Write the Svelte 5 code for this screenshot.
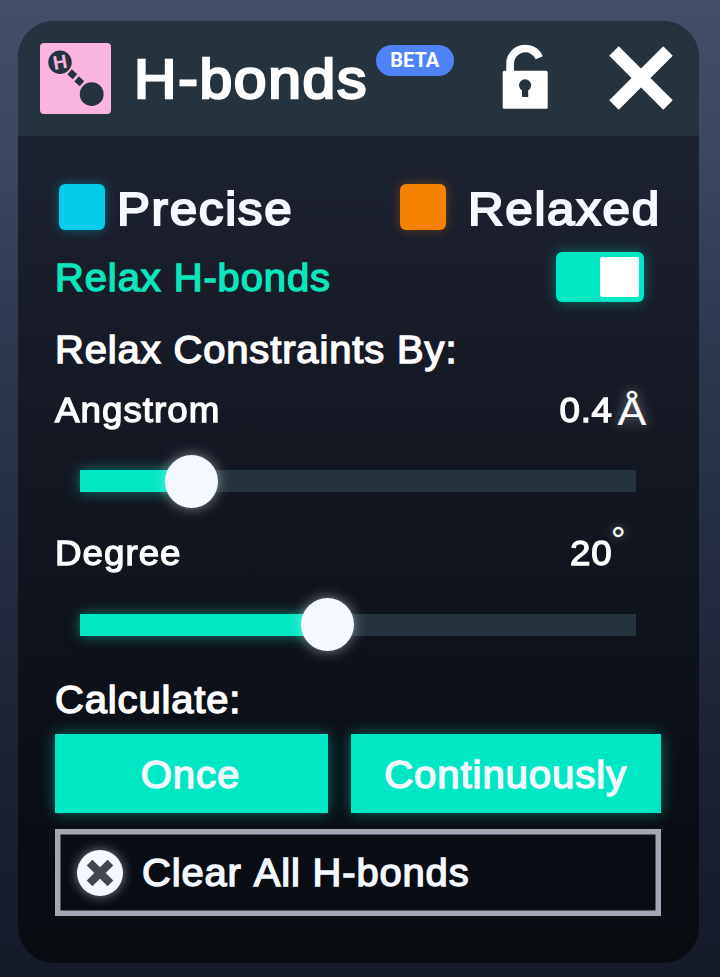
<script>
  let relaxOn = $state(true);
  const sliders = [
    { label: 'Angstrom', value: '0.4', unit: 'Å', kind: 'ang', pos: 111 },
    { label: 'Degree', value: '20', unit: '°', kind: 'deg', pos: 247 }
  ];
</script>

<div class="screen">
  <section class="panel">
    <header>
      <svg class="logo" width="71" height="71" viewBox="0 0 71 71">
        <rect width="71" height="71" rx="4" fill="#fab4e0" />
        <g fill="#24333d">
          <circle cx="20" cy="19.3" r="11.7" />
          <circle cx="51.7" cy="51.2" r="11.9" />
          <rect x="-3.6" y="-3.4" width="7.2" height="6.8" transform="translate(32.3 31.3) rotate(42)" />
          <rect x="-3.6" y="-3.4" width="7.2" height="6.8" transform="translate(39.3 38.3) rotate(42)" />
        </g>
        <text x="0" y="6.6" text-anchor="middle" transform="translate(20 19.3) rotate(-10)">H</text>
      </svg>
      <h1>H-bonds</h1>
      <span class="beta">BETA</span>
      <svg class="lock" width="46" height="65" viewBox="502 44 46 65">
        <path d="M510.1 72V63.7A15.2 15.2 0 0 1 539.3 57.8" fill="none" stroke="#fff" stroke-width="7.7" />
        <rect x="502.7" y="70.7" width="45" height="38" rx="1.5" fill="#fff" />
        <path d="M522 97V90.3A6 6 0 1 1 528.2 90.3V97Z" fill="#24333d" />
      </svg>
      <svg class="close" width="64" height="64" viewBox="0 0 64 64">
        <path d="M5 5L59 59M59 5L5 59" stroke="#fff" stroke-width="13.4" />
      </svg>
    </header>

    <div class="body">
      <div class="legend">
        <i class="swatch cyan"></i><span class="precise">Precise</span>
        <i class="swatch orange"></i><span class="relaxed">Relaxed</span>
      </div>
      <div class="toggle-row">
        <span class="wide">Relax H-bonds</span>
        <button class="toggle" class:on={relaxOn} aria-label="Relax H-bonds" onclick={() => (relaxOn = !relaxOn)}><i></i></button>
      </div>
      <div class="heading wide">Relax Constraints By:</div>
      {#each sliders as s}
        <div class="slider">
          <div class="label">
            <span class="wide">{s.label}</span>
            <span class="value">{s.value}</span>
            <span class="unit {s.kind}">{s.unit}</span>
          </div>
          <div class="track">
            <div class="fill" style="width: {s.pos}px"></div>
            <i class="thumb"></i>
          </div>
        </div>
      {/each}
      <div class="heading calc wide">Calculate:</div>
      <div class="buttons">
        <button><span>Once</span></button>
        <button><span>Continuously</span></button>
      </div>
      <button class="clear">
        <svg width="46" height="46" viewBox="0 0 46 46">
          <circle cx="23" cy="23" r="23" fill="#f4f8ff" />
          <path d="M12.6 12.6L33.4 33.4M33.4 12.6L12.6 33.4" stroke="#41464f" stroke-width="8" />
        </svg>
        <span class="wide">Clear All H-bonds</span>
      </button>
    </div>
  </section>
</div>

<style>
  :global(body) { margin: 0; background: #161c2a; }
  .screen {
    box-sizing: border-box;
    width: 720px;
    height: 977px;
    padding: 20.5px 21.5px 14.5px 17.5px;
    background: linear-gradient(#434f69 0, #3b4760 160px, #2e3a51 320px, #232c41 560px, #1a2133 780px, #141a28 977px);
    font-family: "Liberation Sans", Arial, sans-serif;
    font-kerning: none;
    color: #fff;
    overflow: hidden;
  }
  .panel {
    height: 942px;
    border-radius: 36px;
    overflow: hidden;
    background: linear-gradient(#1d2231 115px, #161a26 350px, #0f131c 590px, #0a0d15 800px, #080c11 942px);
  }
  .wide { transform: translateY(.6px) scaleX(1.05); transform-origin: 0 50%; }
  header {
    box-sizing: border-box;
    height: 115.5px;
    padding: 22.5px 25.5px 0 22.5px;
    display: flex;
    align-items: flex-start;
    background: #24333d;
  }
  .logo { flex: none; }
  .logo text { font: bold 19.5px "Liberation Sans", sans-serif; fill: #fab4e0; }
  h1 {
    margin: 0 0 0 22.7px;
    width: 236px;
    font-size: 56px;
    font-weight: 400;
    line-height: 71px;
    letter-spacing: 1.6px;
    -webkit-text-stroke: 2.5px #fff;
    white-space: nowrap;
    transform: scaleX(1.05);
    transform-origin: 0 50%;
  }
  .beta {
    margin: 2px 0 0 6.3px;
    width: 78.5px;
    height: 31px;
    border-radius: 16px;
    background: #4f83f5;
    text-align: center;
    text-indent: -1px;
    font: bold 20px/31px Roboto, sans-serif;
  }
  .lock { margin: 1px 0 0 47.5px; flex: none; }
  .close { margin: 2.5px 0 0 auto; flex: none; }
  .body { padding: 0 37.5px; }
  .body span, .heading { white-space: nowrap; }
  .legend {
    display: flex;
    align-items: center;
    height: 46px;
    padding: 48px 0 0 4px;
    font-size: 47px;
    letter-spacing: 1.6px;
    line-height: 50px;
    color: #f4f8ff;
    -webkit-text-stroke: 2px #f4f8ff;
  }
  .legend span { transform: translateY(1.5px) scaleX(1.05); transform-origin: 0 50%; }
  .swatch { width: 46px; height: 46px; border-radius: 6px; flex: none; }
  .cyan { background: #05cde9; box-shadow: 0 0 11px #05cde966; }
  .orange { background: #f58300; box-shadow: 0 0 11px #f5830055; }
  .precise { width: 283px; margin-left: 12px; }
  .relaxed { margin-left: 22px; }
  .toggle-row {
    display: flex;
    justify-content: space-between;
    height: 50px;
    margin: 22px 17px 0 -.3px;
    font-size: 38px;
    line-height: 51px;
    letter-spacing: .88px;
    color: #0be6bd;
    -webkit-text-stroke: 1.4px #0be6bd;
  }
  button { border: 0; padding: 0; color: inherit; font: inherit; letter-spacing: inherit; }
  .toggle {
    width: 88px;
    height: 50px;
    padding: 5px;
    box-sizing: border-box;
    border-radius: 6px;
    display: flex;
    background: #24333d;
  }
  .toggle.on { justify-content: flex-end; background: #00e7c3; box-shadow: 0 0 14px #00e7c366; }
  .toggle i { width: 39px; height: 40px; background: #fff; border-radius: 2.5px; }
  .heading {
    width: 400px;
    height: 50px;
    margin: 21.5px 0 0 -.3px;
    font-size: 38px;
    line-height: 50px;
    letter-spacing: .85px;
    -webkit-text-stroke: 1.4px #fff;
  }
  .slider { height: 143.2px; }
  .label {
    display: flex;
    height: 50px;
    padding-top: 11px;
    font-size: 35px;
    line-height: 50px;
    letter-spacing: .95px;
    -webkit-text-stroke: 1.3px #fff;
  }
  .label .wide { margin-left: -.4px; transform: scaleX(1.05); }
  .value { margin-left: auto; letter-spacing: .7px; transform: scaleX(1.05); transform-origin: 100% 50%; }
  .unit { width: 48.5px; letter-spacing: 0; text-shadow: 0 0 12px #ffffff77; transform-origin: 0 0; }
  .ang { font-size: 38.5px; -webkit-text-stroke: .2px #fff; transform: translate(4.4px, 2.4px) scaleX(1.12); }
  .deg { font-size: 36px; -webkit-text-stroke: .3px #fff; transform: translate(-1.4px, -12px); }
  .track {
    display: flex;
    align-items: center;
    width: 556px;
    height: 22px;
    margin: 35.9px 0 0 25px;
    background: #24333d;
  }
  .fill { height: 22px; background: #00e7c3; box-shadow: 0 0 13px #00e7c380; }
  .thumb { width: 53px; height: 53px; margin-left: -26.5px; border-radius: 50%; background: #f4f8ff; box-shadow: 0 0 13px #f4f8ff80; z-index: 1; flex: none; }
  .calc { margin-top: 14.6px; }
  .buttons {
    display: grid;
    grid-template: 79px / 273px 310px;
    gap: 23px;
    height: 79px;
    margin-top: 9.5px;
    font-size: 38.3px;
    letter-spacing: .82px;
    color: #f4f8ff;
    -webkit-text-stroke: 1.4px #f4f8ff;
  }
  .buttons button { background: #00e7c3; box-shadow: 0 0 14px #00e7c370; line-height: 79px; }
  .buttons span { display: inline-block; transform: translateY(1px) scaleX(1.05); }
  .buttons button:first-child { padding-right: 2px; }
  .clear {
    display: flex;
    align-items: center;
    box-sizing: border-box;
    width: 606px;
    height: 87px;
    margin-top: 16px;
    padding: 1px 22px 0;
    background: transparent;
    box-shadow: inset 0 0 0 5.5px #a3a6b5;
    font-size: 38px;
    letter-spacing: .83px;
    color: #f4f8ff;
    -webkit-text-stroke: 1.4px #f4f8ff;
  }
  .clear svg { filter: drop-shadow(0 0 6px #f4f8ff80); }
  .clear span { margin-left: 19px; }
</style>
